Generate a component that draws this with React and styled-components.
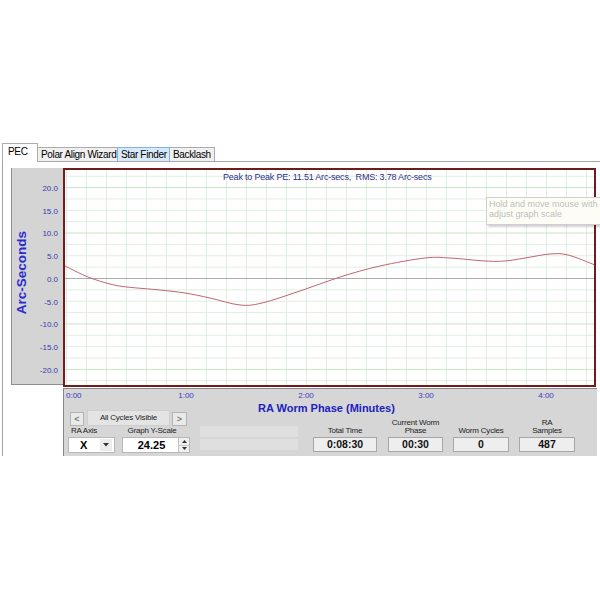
import React from "react";
import styled, { createGlobalStyle } from "styled-components";

const Global = createGlobalStyle`
  html, body { margin: 0; padding: 0; background: #fff; }
  body { width: 600px; height: 600px; overflow: hidden; font-family: "Liberation Sans", Arial, sans-serif; }
`;

const Page = styled.div`
  padding-top: 143px;
  width: 600px;
`;

const TabStrip = styled.div`
  display: flex;
  align-items: flex-end;
  height: 18px;
  margin-left: 2px;
  border-bottom: 1px solid #a9a9a9;
`;

const Tab = styled.div`
  box-sizing: border-box;
  width: ${(p) => p.$w}px;
  height: ${(p) => (p.$active ? 19 : 14)}px;
  margin-bottom: ${(p) => (p.$active ? -1 : 0)}px;
  margin-left: ${(p) => (p.$first ? 0 : -1)}px;
  padding: 0 ${(p) => (p.$active ? 5 : 3)}px;
  background: ${(p) => (p.$active ? "#fff" : p.$hi ? "#d8eaf9" : "#f0f0f0")};
  border: 1px solid ${(p) => (p.$hi ? "#7eb4ea" : "#acacac")};
  border-bottom: none;
  font-size: 10px;
  letter-spacing: -0.35px;
  line-height: ${(p) => (p.$active ? 16 : 13)}px;
  color: #000;
  white-space: nowrap;
  position: relative;
  z-index: ${(p) => (p.$active ? 2 : p.$hi ? 1 : 0)};
`;

const TabPanel = styled.div`
  margin-left: 2px;
  border-left: 1px solid #a0a0a0;
  padding-top: 6px;
`;

const ChartRow = styled.div`
  display: flex;
  padding-left: 8px;
`;

const YAxisPanel = styled.div`
  box-sizing: border-box;
  width: 52px;
  height: 217px;
  background: #d4d4d4;
  border-left: 1px solid #8e8e8e;
  border-bottom: 1px solid #8e8e8e;
  display: flex;
`;

const AxisTitleCol = styled.div`
  width: 19px;
  display: flex;
  align-items: center;
  justify-content: center;
  padding-bottom: 6px;
`;

const VerticalTitle = styled.span`
  writing-mode: vertical-rl;
  transform: rotate(180deg);
  font-weight: bold;
  font-size: 13.5px;
  color: #2b2bd2;
  white-space: nowrap;
`;

const TicksCol = styled.div`
  flex: 1;
  display: flex;
  flex-direction: column;
  padding-top: 10px;
  padding-right: 5px;
`;

const Tick = styled.div`
  height: 22.72px;
  line-height: 22.72px;
  text-align: right;
  font-size: 8px;
  color: #3a3ab0;
`;

const Plot = styled.div`
  position: relative;
  box-sizing: border-box;
  width: 533px;
  height: 219px;
  border: 2px solid #6e1c1c;
  background: #fff;
`;

const PlotSvg = styled.svg`
  display: block;
`;

const PlotTitle = styled.div`
  position: absolute;
  left: 158px;
  top: 1px;
  font-size: 9px;
  line-height: 12px;
  letter-spacing: -0.2px;
  color: #2e2e88;
  white-space: pre;
`;

const Tooltip = styled.div`
  position: absolute;
  left: 421px;
  top: 27px;
  width: 150px;
  height: 24px;
  padding: 1px 2px;
  background: #fdfdf6;
  border: 1px solid #cfcfcf;
  box-shadow: 2px 2px 2px rgba(0, 0, 0, 0.18);
  font-size: 9px;
  line-height: 10px;
  color: #bdbdbd;
  white-space: nowrap;
  z-index: 3;
`;

const BottomPanel = styled.div`
  box-sizing: border-box;
  margin-left: 60px;
  margin-top: 1px;
  width: 534px;
  height: 68px;
  background: #d6d6d6;
  border-top: 1px solid #8a8a8a;
  border-left: 1px solid #8a8a8a;
`;

const AxisRow = styled.div`
  display: flex;
  height: 13px;
  padding-top: 1px;
  box-sizing: border-box;
`;

const XLabel = styled.div`
  width: ${(p) => p.$w}px;
  flex: none;
  text-align: ${(p) => (p.$first ? "left" : "center")};
  padding-left: ${(p) => (p.$first ? 2 : 0)}px;
  box-sizing: border-box;
  font-size: 8px;
  line-height: 11px;
  color: #3838c8;
`;

const ControlsGrid = styled.div`
  display: grid;
  padding-left: 5px;
  grid-template-columns: 131px 113px 1fr;
  grid-template-rows: 8px 15px 12px 17px;
`;

const AxisName = styled.div`
  grid-column: 2 / 4;
  grid-row: 1 / 3;
  margin-left: 58px;
  font-weight: bold;
  font-size: 11px;
  line-height: 13px;
  color: #2020c0;
  white-space: nowrap;
  align-self: start;
`;

const Nav = styled.div`
  grid-column: 1;
  grid-row: 2;
  display: flex;
  align-items: flex-end;
  margin-left: 1px;
  height: 16px;
`;

const NavButton = styled.div`
  box-sizing: border-box;
  width: ${(p) => p.$w}px;
  height: 14px;
  background: #e9e9e9;
  border: 1px solid #b4b4b4;
  font-size: 9px;
  line-height: 12px;
  text-align: center;
  color: #555;
  margin-left: ${(p) => p.$ml}px;
`;

const CyclesBox = styled.div`
  box-sizing: border-box;
  width: 83px;
  height: 16px;
  margin-left: 3px;
  background: #e4e4e4;
  border: 1px solid #cfcfcf;
  font-size: 8px;
  line-height: 14px;
  text-align: center;
  color: #222;
  white-space: nowrap;
  letter-spacing: -0.2px;
`;

const LabelRow = styled.div`
  grid-column: 1;
  grid-row: 3;
  display: flex;
  font-size: 8px;
  line-height: 12px;
  color: #222;
`;

const SmallLabel = styled.div`
  width: ${(p) => p.$w}px;
  margin-left: ${(p) => p.$ml}px;
  text-align: ${(p) => p.$align || "left"};
  white-space: nowrap;
  letter-spacing: -0.2px;
`;

const InputRow = styled.div`
  grid-column: 1;
  grid-row: 4;
  display: flex;
  align-items: flex-start;
`;

const SelectBox = styled.div`
  box-sizing: border-box;
  width: 47px;
  height: 16px;
  margin-left: -1px;
  background: #fff;
  border: 1px solid #b8b8b8;
  display: flex;
  align-items: center;
  font-weight: bold;
  font-size: 11px;
`;

const SelectValue = styled.span`
  flex: 1;
  padding-left: 11px;
`;

const DropButton = styled.div`
  width: 12px;
  height: 12px;
  margin-right: 2px;
  background: #ececec;
  display: flex;
  align-items: center;
  justify-content: center;
`;

const NumberBox = styled.div`
  box-sizing: border-box;
  width: 68px;
  height: 16px;
  margin-left: 7px;
  background: #fff;
  border: 1px solid #b8b8b8;
  display: flex;
  align-items: stretch;
`;

const NumberValue = styled.span`
  flex: 1;
  text-align: center;
  font-weight: bold;
  font-size: 11px;
  line-height: 14px;
  padding-left: 2px;
`;

const Spinner = styled.div`
  width: 10px;
  display: flex;
  flex-direction: column;
  border-left: 1px solid #c4c4c4;
  background: #efefef;
`;

const SpinHalf = styled.div`
  flex: 1;
  display: flex;
  align-items: center;
  justify-content: center;
  border-bottom: ${(p) => (p.$top ? "1px solid #c4c4c4" : "none")};
`;

const EmptyCol = styled.div`
  grid-column: 2;
  grid-row: 3 / 5;
  display: flex;
  flex-direction: column;
  gap: 2px;
  padding-top: 1px;
`;

const EmptyBox = styled.div`
  width: 98px;
  height: 11px;
  background: #dfdfdf;
`;

const Stats = styled.div`
  grid-column: 3;
  grid-row: 2 / 5;
  display: flex;
  align-items: flex-end;
  padding-bottom: 2px;
`;

const Field = styled.div`
  display: flex;
  flex-direction: column;
  align-items: center;
  width: ${(p) => p.$w}px;
  margin-left: ${(p) => p.$ml}px;
`;

const FieldLabel = styled.div`
  font-size: 8px;
  line-height: 8px;
  text-align: center;
  color: #222;
  margin-bottom: 2px;
  letter-spacing: -0.2px;
`;

const FieldBox = styled.div`
  box-sizing: border-box;
  width: 100%;
  height: 15px;
  background: #eeeeee;
  border: 1px solid #a6a6a6;
  font-weight: bold;
  font-size: 10.5px;
  line-height: 13px;
  text-align: center;
  color: #111;
`;

const W = 529;
const H = 215;
const Y0 = 108.5;
const STEP = 11.36;

const rawPts = [
  [65, 265], [88, 276], [110, 283], [127, 286], [160, 289], [185, 292],
  [210, 297], [240, 304], [262, 302], [300, 290], [340, 276], [380, 265],
  [425, 257], [450, 257], [485, 260], [505, 260], [525, 257], [550, 253],
  [568, 254], [595, 264],
];

function smoothPath(p) {
  let d = `M${p[0][0]},${p[0][1]}`;
  for (let i = 0; i < p.length - 1; i++) {
    const p0 = p[i - 1] || p[i];
    const p1 = p[i];
    const p2 = p[i + 1];
    const p3 = p[i + 2] || p2;
    const c1 = [p1[0] + (p2[0] - p0[0]) / 6, p1[1] + (p2[1] - p0[1]) / 6];
    const c2 = [p2[0] - (p3[0] - p1[0]) / 6, p2[1] - (p3[1] - p1[1]) / 6];
    d += ` C${c1[0].toFixed(1)},${c1[1].toFixed(1)} ${c2[0].toFixed(1)},${c2[1].toFixed(1)} ${p2[0]},${p2[1]}`;
  }
  return d;
}

function Chart() {
  const pts = rawPts.map(([x, y]) => [x - 65, y - 169]);
  const vLines = [];
  for (let x = 1; x < W; x += 20) vLines.push(x);
  const hLines = [];
  for (let k = -9; k <= 9; k++) if (k !== 0) hLines.push(k);
  return (
    <PlotSvg width={W} height={H} viewBox={`0 0 ${W} ${H}`}>
      {vLines.map((x) => (
        <line key={"v" + x} x1={x + 0.5} y1={0} x2={x + 0.5} y2={H} stroke="#dfefdf" strokeWidth="1" />
      ))}
      {hLines.map((k) => (
        <line
          key={"h" + k}
          x1={0}
          x2={W}
          y1={Y0 + k * STEP}
          y2={Y0 + k * STEP}
          stroke={k % 4 === 0 ? "#c8e3c8" : "#dfefdf"}
          strokeWidth="1"
        />
      ))}
      <line x1={0} x2={W} y1={Y0} y2={Y0} stroke="#ababab" strokeWidth="1" />
      <path d={smoothPath(pts)} fill="none" stroke="#c06474" strokeWidth="1" />
    </PlotSvg>
  );
}

const ticks = ["20.0", "15.0", "10.0", "5.0", "0.0", "-5.0", "-10.0", "-15.0", "-20.0"];

export default function App() {
  return (
    <>
      <Global />
      <Page>
        <TabStrip>
          <Tab $active $first $w={36}>PEC</Tab>
          <Tab $w={81}>Polar Align Wizard</Tab>
          <Tab $hi $w={53}>Star Finder</Tab>
          <Tab $w={46}>Backlash</Tab>
        </TabStrip>
        <TabPanel>
          <ChartRow>
            <YAxisPanel>
              <AxisTitleCol>
                <VerticalTitle>Arc-Seconds</VerticalTitle>
              </AxisTitleCol>
              <TicksCol>
                {ticks.map((t) => (
                  <Tick key={t}>{t}</Tick>
                ))}
              </TicksCol>
            </YAxisPanel>
            <Plot>
              <Chart />
              <PlotTitle>{"Peak to Peak PE: 11.51 Arc-secs,  RMS: 3.78 Arc-secs"}</PlotTitle>
              <Tooltip>
                Hold and move mouse with left button to
                <br />
                adjust graph scale
              </Tooltip>
            </Plot>
          </ChartRow>
          <BottomPanel>
            <AxisRow>
              <XLabel $first $w={62}>0:00</XLabel>
              <XLabel $w={120}>1:00</XLabel>
              <XLabel $w={120}>2:00</XLabel>
              <XLabel $w={120}>3:00</XLabel>
              <XLabel $w={120}>4:00</XLabel>
            </AxisRow>
            <ControlsGrid>
              <AxisName>RA Worm Phase (Minutes)</AxisName>
              <Nav>
                <NavButton $w={14} $ml={0}>&lt;</NavButton>
                <CyclesBox>All Cycles Visible</CyclesBox>
                <NavButton $w={15} $ml={2}>&gt;</NavButton>
              </Nav>
              <LabelRow>
                <SmallLabel $w={50} $ml={2}>RA Axis</SmallLabel>
                <SmallLabel $w={60} $ml={1} $align="center">Graph Y-Scale</SmallLabel>
              </LabelRow>
              <InputRow>
                <SelectBox>
                  <SelectValue>X</SelectValue>
                  <DropButton>
                    <svg width="6" height="4" viewBox="0 0 6 4">
                      <path d="M0 0 L6 0 L3 3.5 Z" fill="#333" />
                    </svg>
                  </DropButton>
                </SelectBox>
                <NumberBox>
                  <NumberValue>24.25</NumberValue>
                  <Spinner>
                    <SpinHalf $top>
                      <svg width="5" height="3" viewBox="0 0 5 3">
                        <path d="M0 3 L5 3 L2.5 0 Z" fill="#333" />
                      </svg>
                    </SpinHalf>
                    <SpinHalf>
                      <svg width="5" height="3" viewBox="0 0 5 3">
                        <path d="M0 0 L5 0 L2.5 3 Z" fill="#333" />
                      </svg>
                    </SpinHalf>
                  </Spinner>
                </NumberBox>
              </InputRow>
              <EmptyCol>
                <EmptyBox />
                <EmptyBox />
              </EmptyCol>
              <Stats>
                <Field $w={64} $ml={0}>
                  <FieldLabel>Total Time</FieldLabel>
                  <FieldBox>0:08:30</FieldBox>
                </Field>
                <Field $w={55} $ml={11}>
                  <FieldLabel>
                    Current Worm
                    <br />
                    Phase
                  </FieldLabel>
                  <FieldBox>00:30</FieldBox>
                </Field>
                <Field $w={56} $ml={10}>
                  <FieldLabel>Worm Cycles</FieldLabel>
                  <FieldBox>0</FieldBox>
                </Field>
                <Field $w={56} $ml={10}>
                  <FieldLabel>
                    RA
                    <br />
                    Samples
                  </FieldLabel>
                  <FieldBox>487</FieldBox>
                </Field>
              </Stats>
            </ControlsGrid>
          </BottomPanel>
        </TabPanel>
      </Page>
    </>
  );
}
